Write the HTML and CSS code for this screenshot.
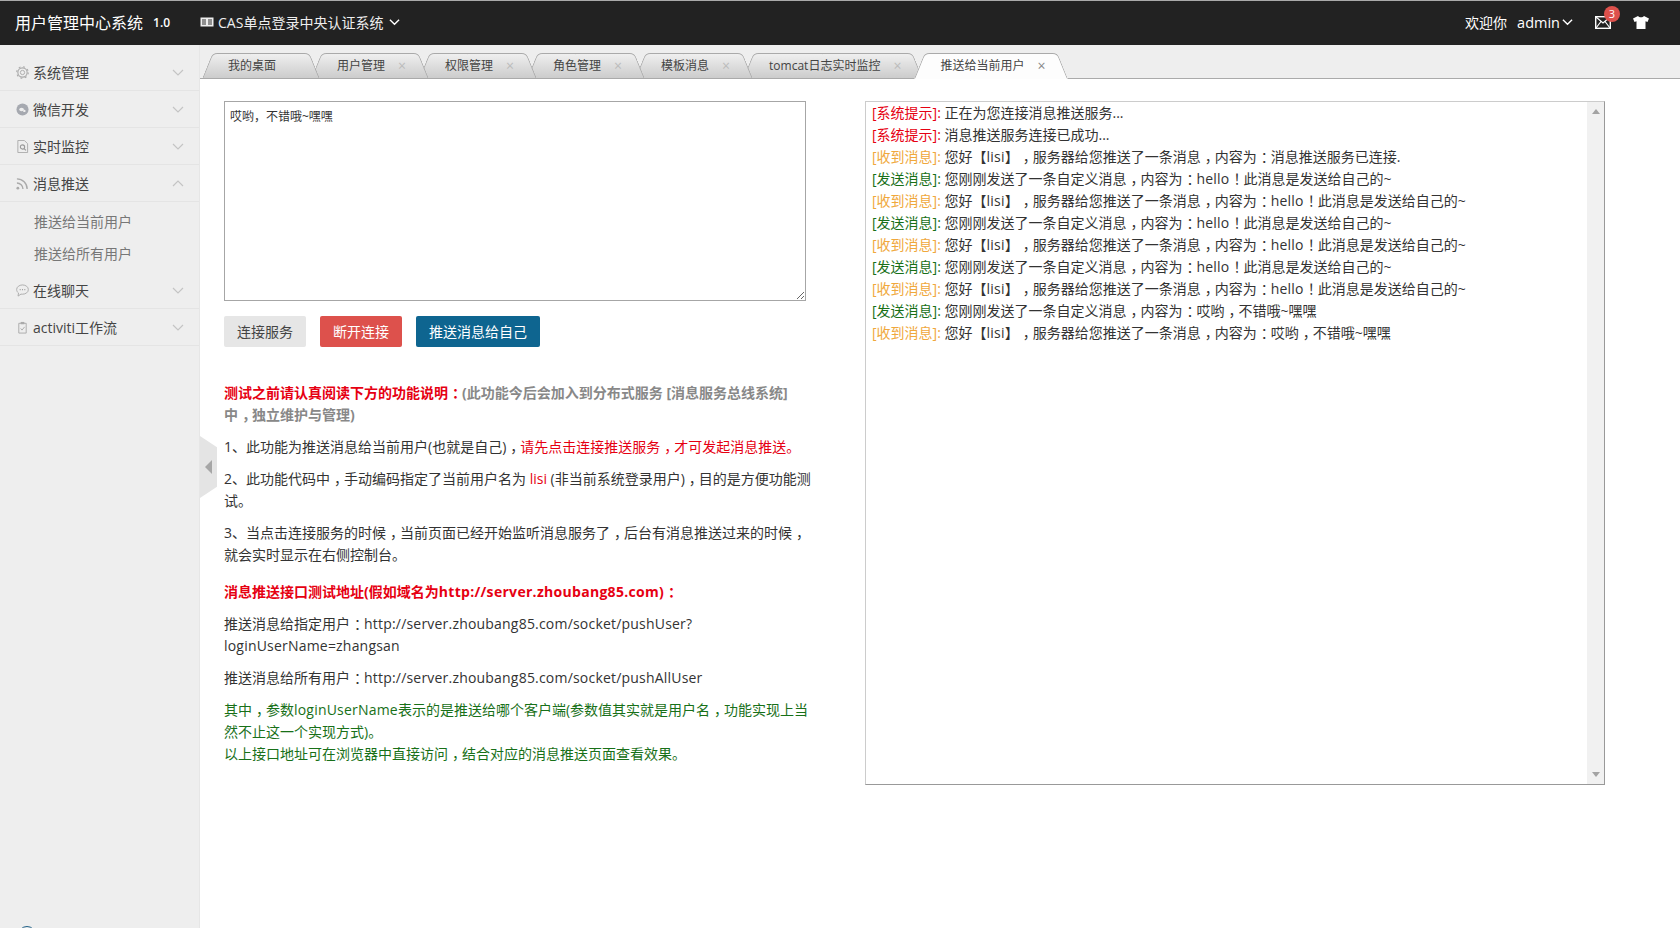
FILE: index.html
```html
<!DOCTYPE html>
<html>
<head>
    <title>用户管理中心系统</title>
    <link rel="stylesheet" href="styles.css">
</head>
<body>
    <div id="header">
        <span class="logo">用户管理中心系统</span>
        <span class="version">1.0</span>
        <div class="system-menu">
            <svg class="card-icon" viewBox="0 0 14 10"><rect x="0.5" y="0.5" width="13" height="9" fill="#eee"/><path d="M2 3h4M2 5h4M2 7h4M8 3h4M8 5h4M8 7h4" stroke="#333" stroke-width="1"/></svg>
            <span>CAS单点登录中央认证系统</span>
            <svg class="chevron-light" viewBox="0 0 12 8"><path d="M1 1.5l5 5 5-5" fill="none" stroke="#fff" stroke-width="1.5"/></svg>
        </div>
        <div class="user-menu">
            <span class="welcome">欢迎你</span>
            <span class="user-name">admin</span>
            <svg class="chevron-light" viewBox="0 0 12 8"><path d="M1 1.5l5 5 5-5" fill="none" stroke="#fff" stroke-width="1.5"/></svg>
            <div class="mail">
                <svg class="mail-icon" viewBox="0 0 16 13"><rect x="0.7" y="0.7" width="14.6" height="11.6" fill="none" stroke="#fff" stroke-width="1.4"/><path d="M1 1l7 6 7-6M1 12l5-6.500M15 12l-5-6.500" fill="none" stroke="#fff" stroke-width="1.200"/></svg>
                <span class="badge">3</span>
            </div>
            <svg class="shirt-icon" viewBox="0 0 16 13"><path d="M5 0L0 2.500 1.500 6 3.500 5.200V13h9V5.200L14.500 6 16 2.500 11 0C10 1.800 6 1.800 5 0z" fill="#fff"/></svg>
        </div>
    </div>

    <div id="main">
        <div id="sidebar">
            <div class="menu-item">
                <svg class="menu-icon" viewBox="0 0 14 14"><circle cx="7" cy="7" r="2.300" fill="none" stroke="#aaa"/><circle cx="7" cy="7" r="5" fill="none" stroke="#aaa" stroke-width="1.200"/><circle cx="7" cy="7" r="6.200" fill="none" stroke="#aaa" stroke-width="1.200" stroke-dasharray="2 2.860"/></svg>
                <span>系统管理</span>
                <svg class="chevron" viewBox="0 0 12 7"><path d="M1 1l5 5 5-5" fill="none" stroke="#c4c4c4" stroke-width="1.200"/></svg>
            </div>
            <div class="menu-item">
                <svg class="menu-icon" viewBox="0 0 14 14"><circle cx="7" cy="7" r="6.500" fill="#a6a9b0"/><ellipse cx="6" cy="7" rx="2.500" ry="1.800" fill="#eee"/><circle cx="9" cy="8.500" r="1.300" fill="#eee"/></svg>
                <span>微信开发</span>
                <svg class="chevron" viewBox="0 0 12 7"><path d="M1 1l5 5 5-5" fill="none" stroke="#c4c4c4" stroke-width="1.200"/></svg>
            </div>
            <div class="menu-item">
                <svg class="menu-icon" viewBox="0 0 14 14"><path d="M2 .5h7l3.500 3.500v9.500H2z" fill="none" stroke="#aaa"/><circle cx="7" cy="7.500" r="2.300" fill="none" stroke="#999" stroke-width="1.200"/><path d="M8.700 9.200l2 2" stroke="#999" stroke-width="1.200"/></svg>
                <span>实时监控</span>
                <svg class="chevron" viewBox="0 0 12 7"><path d="M1 1l5 5 5-5" fill="none" stroke="#c4c4c4" stroke-width="1.200"/></svg>
            </div>
            <div class="menu-item">
                <svg class="menu-icon" viewBox="0 0 14 14"><circle cx="2" cy="12" r="1.500" fill="#aaa"/><path d="M1 6.500a6.500 6.500 0 0 1 6.500 6.500M1 2a11 11 0 0 1 11 11" fill="none" stroke="#aaa" stroke-width="1.500"/></svg>
                <span>消息推送</span>
                <svg class="chevron" viewBox="0 0 12 7"><path d="M1 6l5-5 5 5" fill="none" stroke="#c4c4c4" stroke-width="1.200"/></svg>
            </div>
            <div class="submenu">
                <div class="submenu-item">推送给当前用户</div>
                <div class="submenu-item">推送给所有用户</div>
            </div>
            <div class="menu-item">
                <svg class="menu-icon" viewBox="0 0 14 14"><path d="M7 1C3.500 1 .7 3.200.7 6c0 1.500.8 2.800 2 3.700L2.200 13l3.200-2.100c.5.100 1 .1 1.600.1 3.500 0 6.300-2.200 6.300-5S10.500 1 7 1z" fill="none" stroke="#aaa"/><path d="M4 6h1M6.500 6h1M9 6h1" stroke="#999" stroke-width="1.200"/></svg>
                <span>在线聊天</span>
                <svg class="chevron" viewBox="0 0 12 7"><path d="M1 1l5 5 5-5" fill="none" stroke="#c4c4c4" stroke-width="1.200"/></svg>
            </div>
            <div class="menu-item">
                <svg class="menu-icon" viewBox="0 0 14 14"><path d="M3 2.500h8v10.500H3z" fill="none" stroke="#aaa"/><path d="M5 1h4v2.500H5z" fill="#aaa"/><path d="M5 8l1.500 1.800L9.300 6.300" fill="none" stroke="#aaa"/></svg>
                <span>activiti工作流</span>
                <svg class="chevron" viewBox="0 0 12 7"><path d="M1 1l5 5 5-5" fill="none" stroke="#c4c4c4" stroke-width="1.200"/></svg>
            </div>
            <div class="corner-ring"></div>
        </div>
        <div class="sidebar-handle"><div class="handle-arrow"></div></div>

        <div id="content">
            <div id="tabs">
                <div class="tab tab-home"><span>我的桌面</span></div>
                <div class="tab"><span>用户管理</span><i class="tab-close">×</i></div>
                <div class="tab"><span>权限管理</span><i class="tab-close">×</i></div>
                <div class="tab"><span>角色管理</span><i class="tab-close">×</i></div>
                <div class="tab"><span>模板消息</span><i class="tab-close">×</i></div>
                <div class="tab"><span>tomcat日志实时监控</span><i class="tab-close">×</i></div>
                <div class="tab active"><span>推送给当前用户</span><i class="tab-close">×</i></div>
            </div>

            <div id="page">
                <div class="left-column">
                    <textarea class="message-box">哎哟，不错哦~嘿嘿</textarea>
                    <div class="buttons">
                        <button class="btn btn-default">连接服务</button>
                        <button class="btn btn-danger">断开连接</button>
                        <button class="btn btn-primary">推送消息给自己</button>
                    </div>
                    <div class="notes">
                        <p class="bold gray"><span class="red">测试之前请认真阅读下方的功能说明<span class="pu">：</span></span>(此功能今后会加入到分布式服务 [消息服务总线系统]<br>中<span class="pu">，</span>独立维护与管理)</p>
                        <p>1、此功能为推送消息给当前用户(也就是自己)<span class="pu">，</span><span class="red">请先点击连接推送服务<span class="pu">，</span>才可发起消息推送。</span></p>
                        <p>2、此功能代码中<span class="pu">，</span>手动编码指定了当前用户名为 <span class="red">lisi</span> (非当前系统登录用户)<span class="pu">，</span>目的是方便功能测<br>试。</p>
                        <p>3、当点击连接服务的时候<span class="pu">，</span>当前页面已经开始监听消息服务了<span class="pu">，</span>后台有消息推送过来的时候<span class="pu">，</span><br>就会实时显示在右侧控制台。</p>
                        <p class="bold red note-title">消息推送接口测试地址(假如域名为<span class="la-bold">http://server.zhoubang85.com)</span><span class="pu">：</span></p>
                        <p>推送消息给指定用户<span class="pu">：</span><span class="la">http://server.zhoubang85.com/socket/pushUser?<br>loginUserName=zhangsan</span></p>
                        <p>推送消息给所有用户<span class="pu">：</span><span class="la">http://server.zhoubang85.com/socket/pushAllUser</span></p>
                        <p class="green">其中<span class="pu">，</span>参数<span class="la">loginUserName</span>表示的是推送给哪个客户端(参数值其实就是用户名<span class="pu">，</span>功能实现上当<br>然不止这一个实现方式)。<br>以上接口地址可在浏览器中直接访问<span class="pu">，</span>结合对应的消息推送页面查看效果。</p>
                    </div>
                </div>

                <div class="console">
                    <div class="console-lines">
                        <div><span class="red">[系统提示]:</span> 正在为您连接消息推送服务...</div>
                        <div><span class="red">[系统提示]:</span> 消息推送服务连接已成功...</div>
                        <div><span class="orange">[收到消息]:</span> 您好【<span class="name">lisi</span>】<span class="pu">，</span>服务器给您推送了一条消息<span class="pu">，</span>内容为<span class="pu">：</span>消息推送服务已连接.</div>
                        <div><span class="green">[发送消息]:</span> 您刚刚发送了一条自定义消息<span class="pu">，</span>内容为<span class="pu">：</span><span class="la">hello</span><span class="pu">！</span>此消息是发送给自己的~</div>
                        <div><span class="orange">[收到消息]:</span> 您好【<span class="name">lisi</span>】<span class="pu">，</span>服务器给您推送了一条消息<span class="pu">，</span>内容为<span class="pu">：</span><span class="la">hello</span><span class="pu">！</span>此消息是发送给自己的~</div>
                        <div><span class="green">[发送消息]:</span> 您刚刚发送了一条自定义消息<span class="pu">，</span>内容为<span class="pu">：</span><span class="la">hello</span><span class="pu">！</span>此消息是发送给自己的~</div>
                        <div><span class="orange">[收到消息]:</span> 您好【<span class="name">lisi</span>】<span class="pu">，</span>服务器给您推送了一条消息<span class="pu">，</span>内容为<span class="pu">：</span><span class="la">hello</span><span class="pu">！</span>此消息是发送给自己的~</div>
                        <div><span class="green">[发送消息]:</span> 您刚刚发送了一条自定义消息<span class="pu">，</span>内容为<span class="pu">：</span><span class="la">hello</span><span class="pu">！</span>此消息是发送给自己的~</div>
                        <div><span class="orange">[收到消息]:</span> 您好【<span class="name">lisi</span>】<span class="pu">，</span>服务器给您推送了一条消息<span class="pu">，</span>内容为<span class="pu">：</span><span class="la">hello</span><span class="pu">！</span>此消息是发送给自己的~</div>
                        <div><span class="green">[发送消息]:</span> 您刚刚发送了一条自定义消息<span class="pu">，</span>内容为<span class="pu">：</span>哎哟<span class="pu">，</span>不错哦~嘿嘿</div>
                        <div><span class="orange">[收到消息]:</span> 您好【<span class="name">lisi</span>】<span class="pu">，</span>服务器给您推送了一条消息<span class="pu">，</span>内容为<span class="pu">：</span>哎哟<span class="pu">，</span>不错哦~嘿嘿</div>
                    </div>
                    <div class="scroll-track">
                        <div class="arrow-up"></div>
                        <div class="arrow-down"></div>
                    </div>
                </div>
            </div>
        </div>
    </div>
</body>
</html>
```

FILE: styles.css
```css
* {
    box-sizing: border-box;
}
body {
    margin: 0;
    height: 928px;
    overflow: hidden;
    display: flex;
    flex-direction: column;
    font-family: "Open Sans", "Noto Sans CJK SC", sans-serif;
    font-size: 14px;
    color: #333;
    background-color: #fff;
    text-spacing-trim: space-all;
}
#header {
    height: 45px;
    border-top: 1px solid #aaa;
    background-color: #222;
    color: #fff;
    display: flex;
    align-items: center;
    padding: 0 31px 2px 15px;
}
.logo {
    font-size: 16px;
}
.version {
    font-size: 12px;
    font-weight: 600;
    margin-left: 10px;
}
.system-menu {
    display: flex;
    align-items: center;
    margin-left: 30px;
    color: #eee;
}
.card-icon {
    width: 14px;
    height: 10px;
    margin-right: 4px;
}
.chevron-light {
    width: 11px;
    height: 8px;
    margin-left: 6px;
}
.user-menu {
    margin-left: auto;
    display: flex;
    align-items: center;
}
.user-name {
    margin-left: 10px;
    font-size: 14.5px;
}
.user-menu .chevron-light {
    margin-left: 2px;
}
.mail {
    position: relative;
    width: 16px;
    height: 13px;
    margin-left: 22px;
    display: flex;
}
.mail-icon {
    width: 16px;
    height: 13px;
}
.badge {
    position: absolute;
    left: 9px;
    top: -10px;
    width: 16px;
    height: 16px;
    border-radius: 50%;
    background-color: #dd514c;
    color: #fff;
    font-size: 11px;
    line-height: 16px;
    text-align: center;
}
.shirt-icon {
    width: 16px;
    height: 13px;
    margin-left: 22px;
}
#main {
    flex: 1;
    display: flex;
    position: relative;
    min-height: 0;
}
#sidebar {
    width: 200px;
    flex-shrink: 0;
    background-color: #eee;
    border-right: 1px solid #e6e6e6;
    padding-top: 9px;
    position: relative;
    overflow: hidden;
}
.menu-item {
    height: 37px;
    display: flex;
    align-items: center;
    padding: 0 16px;
    border-bottom: 1px solid #e4e4e4;
    color: #444;
}
.menu-icon {
    width: 13px;
    height: 13px;
    margin-right: 4px;
    flex-shrink: 0;
}
.chevron {
    width: 12px;
    height: 7px;
    margin-left: auto;
    margin-right: -1px;
}
.submenu {
    padding: 4px 0 2px;
    border-bottom: 0;
}
.submenu-item {
    height: 32px;
    line-height: 32px;
    padding-left: 34px;
    color: #777;
}
.corner-ring {
    position: absolute;
    left: 18px;
    top: 881px;
    width: 18px;
    height: 18px;
    border: 1px solid #1e5f86;
    border-radius: 50%;
}
.sidebar-handle {
    position: absolute;
    left: 200px;
    top: 391px;
    width: 17px;
    height: 62px;
    background-color: #e4e4e4;
    clip-path: polygon(0 0, 100% 18%, 100% 82%, 0 100%);
    display: flex;
    align-items: center;
    z-index: 5;
}
.handle-arrow {
    width: 0;
    height: 0;
    margin-left: 5px;
    border-top: 7px solid transparent;
    border-bottom: 7px solid transparent;
    border-right: 7px solid #a6a6a6;
}
#content {
    flex: 1;
    min-width: 0;
    display: flex;
    flex-direction: column;
}
#tabs {
    height: 34px;
    flex-shrink: 0;
    background-color: #eee;
    border-bottom: 1px solid #aaa;
    padding: 8px 0 0 2px;
    display: flex;
    align-items: flex-start;
}
.tab {
    position: relative;
    height: 26px;
    margin-right: -9px;
    padding: 0 15px 0 26px;
    font-size: 12px;
    line-height: 26px;
    color: #444;
    display: flex;
    z-index: 1;
}
.tab span,
.tab i {
    position: relative;
    z-index: 1;
}
.tab::before,
.tab::after {
    content: "";
    position: absolute;
    top: 0;
    bottom: 0;
    width: 50%;
    background: linear-gradient(#efefef, #ccc);
    border-top: 1px solid #aaa;
    border-bottom: 1px solid #aaa;
    transform-origin: bottom;
}
.tab::before {
    left: 0;
    border-left: 1px solid #aaa;
    border-top-left-radius: 5px;
    transform: skewX(-22deg);
    transform-origin: bottom left;
}
.tab::after {
    right: 0;
    border-right: 1px solid #aaa;
    border-top-right-radius: 5px;
    transform: skewX(22deg);
    transform-origin: bottom right;
}
.tab:nth-child(1) { z-index: 7; }
.tab:nth-child(2) { z-index: 6; }
.tab:nth-child(3) { z-index: 5; }
.tab:nth-child(4) { z-index: 4; }
.tab:nth-child(5) { z-index: 3; }
.tab:nth-child(6) { z-index: 2; }
.tab-home {
    padding-right: 44px;
}
.tab.active {
    z-index: 8;
}
.tab.active::before,
.tab.active::after {
    background: #fdfdfd;
    border-bottom: 1px solid #fdfdfd;
}
.tab-close {
    width: 15px;
    margin-left: 13px;
    font-style: normal;
    font-size: 14px;
    color: #bbb;
}
.tab.active .tab-close {
    color: #888;
}
#page {
    flex: 1;
    display: flex;
    align-items: flex-start;
    padding: 22px 0 0 24px;
    min-height: 0;
}
.left-column {
    width: 594px;
    flex-shrink: 0;
}
.message-box {
    display: block;
    width: 582px;
    height: 200px;
    border: 1px solid #a6a6a6;
    padding: 5px;
    font-family: "Open Sans", "Noto Sans CJK SC", sans-serif;
    font-size: 12px;
    color: #333;
    outline: none;
}
.buttons {
    display: flex;
    gap: 14px;
    margin-top: 15px;
}
.btn {
    height: 31px;
    padding: 0 13px 2px;
    border: none;
    border-radius: 2px;
    font-family: "Open Sans", "Noto Sans CJK SC", sans-serif;
    font-size: 14px;
}
.btn-default {
    background-color: #e6e6e6;
    color: #444;
}
.btn-danger {
    background-color: #dd514c;
    color: #fff;
}
.btn-primary {
    background-color: #0e6590;
    color: #fff;
}
.notes {
    margin-top: 35px;
    line-height: 22px;
    white-space: nowrap;
}
.notes p {
    margin: 0 0 10px;
}
.notes .note-title {
    margin-top: 15px;
}
/* full-width punctuation sits mid-cell in the original font */
.pu {
    padding-left: 4px;
    letter-spacing: -4px;
}
.la {
    letter-spacing: 0.2px;
}
.la-bold {
    letter-spacing: 0.3px;
}
.name {
    letter-spacing: 0.25px;
}
.bold {
    font-weight: bold;
}
.gray {
    color: #888;
}
.red {
    color: #e60012;
}
.green {
    color: #187018;
}
.orange {
    color: #f0a83c;
}
.console {
    width: 740px;
    height: 684px;
    margin-left: 47px;
    flex-shrink: 0;
    display: flex;
    border: 1px solid #999;
    border-top-color: #ccc;
    border-left-color: #ccc;
}
.console-lines {
    flex: 1;
    padding-left: 6px;
    line-height: 22px;
}
.scroll-track {
    width: 17px;
    background-color: #f1f1f1;
    display: flex;
    flex-direction: column;
    justify-content: space-between;
    align-items: center;
    padding: 7px 0;
}
.arrow-up {
    border-left: 4px solid transparent;
    border-right: 4px solid transparent;
    border-bottom: 5px solid #a3a3a3;
}
.arrow-down {
    border-left: 4px solid transparent;
    border-right: 4px solid transparent;
    border-top: 5px solid #a3a3a3;
}
```
